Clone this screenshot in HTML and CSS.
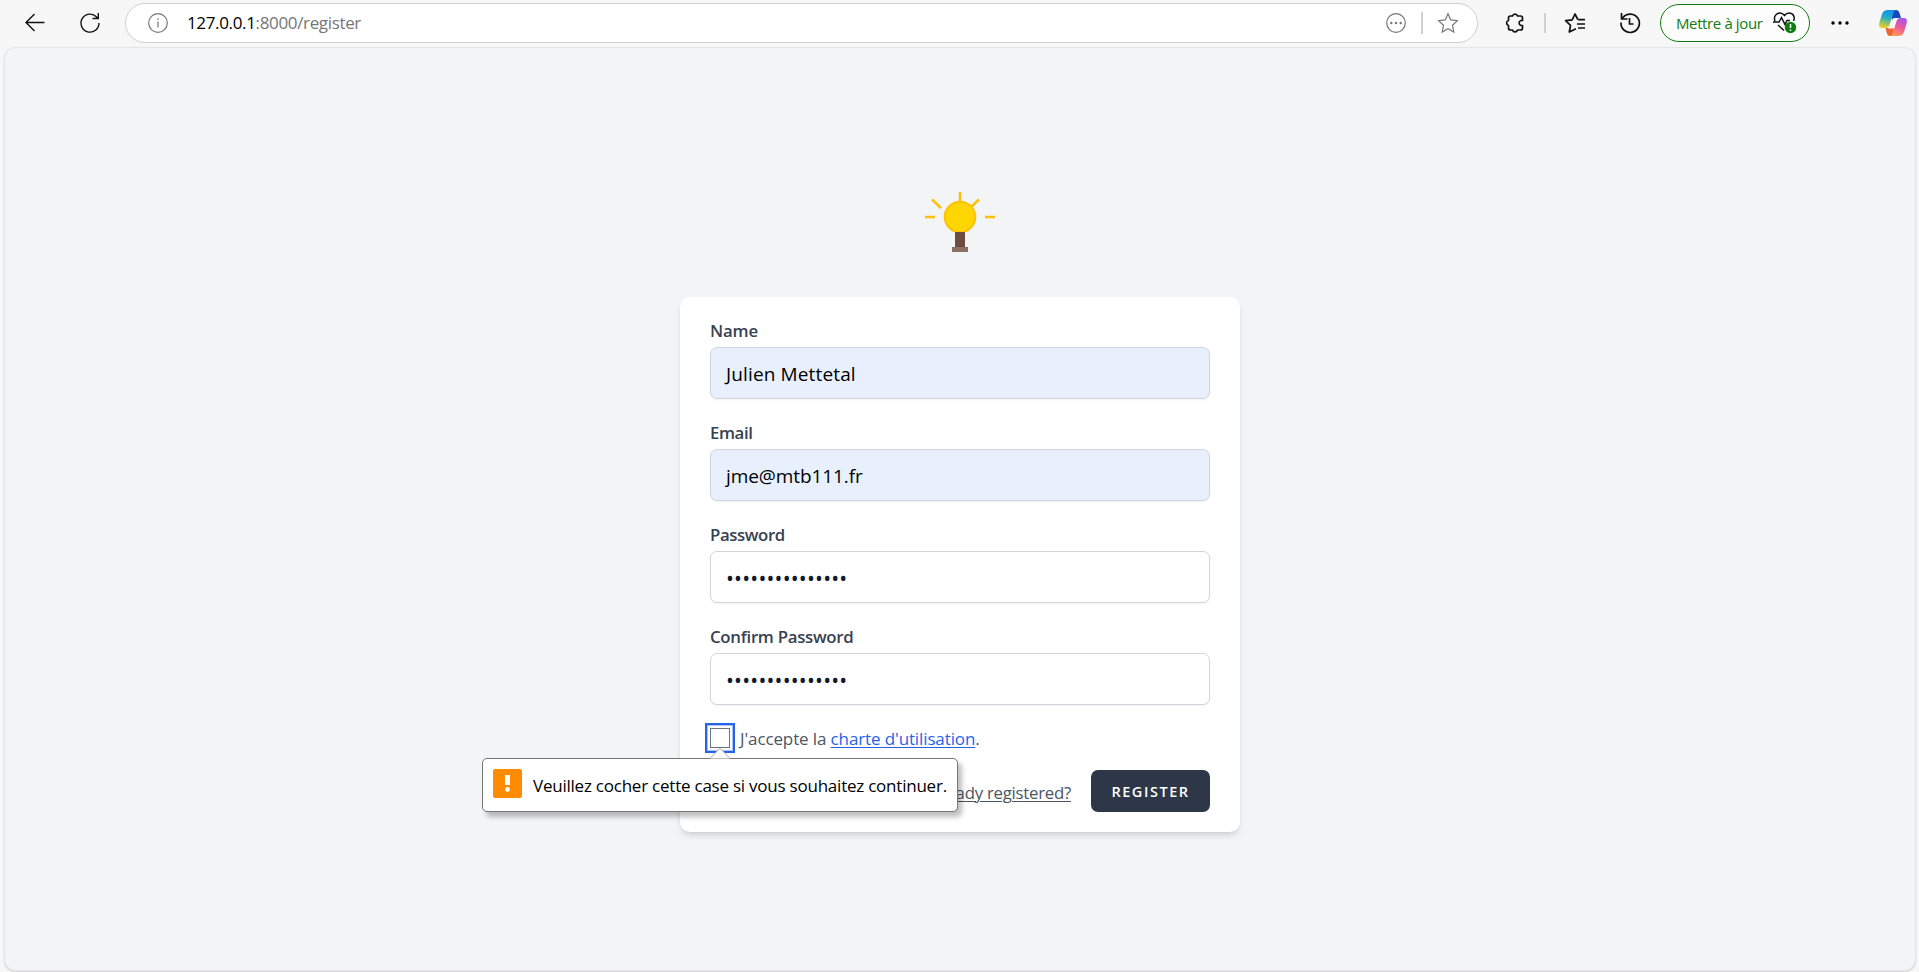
FILE: index.html
```html
<!DOCTYPE html>
<html lang="fr">
<head>
<meta charset="utf-8">
<title>Register</title>
<link rel="stylesheet" href="styles.css">
</head>
<body>
<header class="toolbar">
  <svg class="icon back" viewBox="0 0 20 20"><path d="M19.500 9.500H1M9.500 1 1 9.500 9.500 18"/></svg>
  <svg class="icon reload" viewBox="0 0 20 20"><path d="M19 10A9 9 0 1 1 16.600 4L18 5.500M18.300 0V5.500H12.500"/></svg>
  <div class="address">
    <svg class="icon muted info" viewBox="0 0 20 20"><circle cx="10" cy="10" r="9.300"/><path d="M10 8.500V14.500M10 5.200V7"/></svg>
    <span class="url"><b>127.0.0.1</b>:8000/register</span>
    <svg class="icon muted" viewBox="0 0 20 20"><circle cx="10" cy="10" r="9.300"/><g class="dots"><circle cx="5.300" cy="10" r="1.200"/><circle cx="10" cy="10" r="1.200"/><circle cx="14.700" cy="10" r="1.200"/></g></svg>
    <span class="rule rule-address"></span>
    <svg class="icon muted" viewBox="0 0 20 20"><path d="M10 .8 12.800 6.900 19.400 7.700 14.500 12.300 15.800 19 10 15.700 4.200 19 5.500 12.300.6 7.700 7.200 6.900Z"/></svg>
  </div>
  <svg class="icon puzzle" viewBox="0 0 20 20"><path class="bold" d="M4.500 3H7.500A2.600 2.600 0 0 1 12.500 3H15.500Q17.500 3 17.500 5V7.500H16A2.600 2.600 0 0 0 16 12.500H17.500V15Q17.500 17 15.500 17H12.500A2.600 2.600 0 0 1 7.500 17H5.500Q3.500 17 3.500 15V12.500A2.600 2.600 0 0 1 3.500 7.500V5Q3.500 3 5.500 3"/></svg>
  <span class="rule"></span>
  <svg class="icon favorites" viewBox="0 0 20 20"><path class="bold" d="M11 15.800 4.300 19 5.500 12.300.6 7.700 7.200 6.900 10 1 12.800 6.500M13 6.700H20M12 11H20M13 15H20"/></svg>
  <svg class="icon history" viewBox="0 0 20 20"><path class="bold" d="M1 9.500A9.200 9.200 0 1 0 3 4.500L1.500 6M1.500 0V6H7.500M9.500 5V11H13.500"/></svg>
  <div class="update">
    <span>Mettre à jour</span>
    <svg class="health" viewBox="0 0 24 22"><path d="M2 9C0 4 4 1 7 1Q9.500 1 11.500 3.500 13.500 1 16 1C20 1 22.500 5 20.500 9M0 10H6L8.500 5.500 12 12.500 14 8.500H17M5 13 11 18.500"/><circle cx="17.500" cy="15.500" r="5.700"/><path class="mark" d="M17.500 12V16M17.500 17.500V19"/></svg>
  </div>
  <svg class="more" viewBox="0 0 18 4"><circle cx="2" cy="2" r="1.700"/><circle cx="9" cy="2" r="1.700"/><circle cx="16" cy="2" r="1.700"/></svg>
  <svg class="copilot" viewBox="0 0 28 26">
    <defs>
      <linearGradient id="cool" x1=".5" y1="0" x2=".3" y2="1"><stop offset="0" stop-color="#1692ed"/><stop offset=".4" stop-color="#1eacc9"/><stop offset=".7" stop-color="#8ac36a"/><stop offset="1" stop-color="#f5cf1d"/></linearGradient>
      <linearGradient id="warm" x1=".7" y1="0" x2=".3" y2="1"><stop offset="0" stop-color="#a756ed"/><stop offset=".5" stop-color="#ee599a"/><stop offset="1" stop-color="#ff9d55"/></linearGradient>
    </defs>
    <path fill="#1748bf" d="M12 0H17Q19.500 0 20.500 3L22 8H17Q14 8 13 11Z"/>
    <path fill="#f0642f" d="M6.500 18H10.500L14 15 16 26H11Q8.500 26 7.800 23Z"/>
    <path fill="url(#cool)" d="M9 0H17Q15 0 14 4L10.500 15Q9.500 18 6.500 18H3Q-1 18 .5 12L3 4Q4.300 0 9 0Z"/>
    <path fill="url(#warm)" d="M19 26H11Q13 26 14 22L17.500 11Q18.500 8 21.500 8H25Q29 8 27.500 14L25 22Q23.700 26 19 26Z"/>
    <path fill="#f7f7f7" d="M17 8H20Q18 8.500 17.300 11L15.300 17.500Q14.800 18.500 13.500 18.500H9Q10.300 17.500 10.900 15.500L12.700 10Q13.500 8 17 8Z"/>
  </svg>
</header>
<main class="viewport">
  <svg class="bulb" viewBox="0 0 80 80">
    <path class="ray" d="M40 12V24M5 37H15M65 37H75M12 19.500 21 28M59 19.500 50 28"/>
    <circle cx="40" cy="37" r="15.300"/>
    <path fill="#6d4c41" d="M35 52H45V67H35Z"/><path fill="#8d6e63" d="M32 67H48V72H32Z"/>
  </svg>
  <form class="card">
    <div class="field"><label class="l-name">Name</label><div class="input filled"><span class="v-name">Julien Mettetal</span></div></div>
    <div class="field"><label class="l-email">Email</label><div class="input filled"><span class="v-email">jme@mtb111.fr</span></div></div>
    <div class="field"><label class="l-pass">Password</label><div class="input"><span class="secret">•••••••••••••••</span></div></div>
    <div class="field"><label class="l-confirm">Confirm Password</label><div class="input"><span class="secret">•••••••••••••••</span></div></div>
    <div class="terms">
      <span class="checkbox"></span>
      <span class="terms-text">J'accepte la <a>charte d'utilisation</a>.</span>
      <div class="tooltip">
        <svg class="arrow" viewBox="0 0 22 12"><path d="M1 11.500 11 1.200 21 11.500"/></svg>
        <svg class="warning" viewBox="0 0 29 29"><rect width="29" height="29" rx="2"/><path d="M12 6H17V16H12Z"/><circle cx="14.500" cy="20.500" r="2.400"/></svg>
        <span class="message">Veuillez cocher cette case si vous souhaitez continuer.</span>
      </div>
    </div>
    <div class="actions"><a class="already">Already registered?</a><span class="button">REGISTER</span></div>
  </form>
</main>
</body>
</html>
```
FILE: styles.css
```css
* { box-sizing: border-box; }
body {
  margin: 0; height: 972px; overflow: hidden; background: #f7f7f7;
  font-family: "Open Sans", "Noto Sans", sans-serif;
  display: flex; flex-direction: column;
}
svg { display: block; flex: none; }
.toolbar { height: 47px; padding: 0 12px 1px 25px; display: flex; align-items: center; flex: none; }
.icon { width: 20px; height: 20px; fill: none; stroke: #111; stroke-width: 1.4; overflow: visible; }
.icon .bold { stroke-width: 1.7; stroke-linejoin: round; }
.muted { stroke: #767676; stroke-width: 1.2; }
.dots { fill: #767676; stroke: none; }
.reload { margin-left: 35px; }
.address {
  width: 1353px; height: 40px; margin-left: 25px; padding: 0 19px 0 22px;
  display: flex; align-items: center; flex: none;
  border: 1px solid #cfcfcf; border-radius: 20px; background: #fff;
}
.url { margin-left: 19px; margin-right: auto; padding-bottom: 2px; font-size: 17px; letter-spacing: -.35px; color: #767676; white-space: nowrap; }
.url b { font-weight: 400; color: #000; }
.rule { width: 2px; height: 20px; background: #d0d0d0; margin-left: 19px; }
.rule-address { height: 22px; margin: 0 15px; }
.puzzle { margin-left: 27px; }
.favorites { margin-left: 19px; }
.history { margin-left: 35px; }
.update {
  width: 150px; height: 38px; margin-left: 20px; padding: 0 12px 0 15px;
  display: flex; align-items: center; justify-content: space-between; flex: none;
  border: 1.5px solid #107c10; border-radius: 19px; color: #107c10;
  font-size: 15px; letter-spacing: -.38px; white-space: nowrap; background: #fdfdfd;
}
.update span { padding-bottom: 1px; }
.health { width: 24px; height: 22px; fill: none; stroke: #111; stroke-width: 1.5; }
.health circle { fill: #107c10; stroke: none; }
.health .mark { stroke: #fff; }
.more { width: 18px; height: 4px; margin-left: 21px; }
.copilot { width: 28px; height: 26px; margin-left: auto; }
.viewport {
  width: 1912px; height: 924px; margin-left: 4px; flex: none;
  display: flex; flex-direction: column; align-items: center;
  background: #f3f4f6; border: 1px solid #e6e6e8; border-radius: 12px;
  box-shadow: 0 1px 2px rgba(0,0,0,.15);
}
.bulb { width: 80px; height: 80px; margin-top: 132px; }
.bulb circle { fill: #ffd600; stroke: #ffc107; stroke-width: 2; }
.ray { fill: none; stroke: #ffc107; stroke-width: 2.5; }
.card {
  width: 560px; height: 535px; margin-top: 37px; padding: 20px 30px;
  background: #fff; border-radius: 10px;
  box-shadow: 0 5px 7.5px -1px rgba(0,0,0,.1), 0 2px 5px -2px rgba(0,0,0,.1);
}
.field { margin-bottom: 20px; }
label { display: block; height: 25px; margin-bottom: 5px; line-height: 28px; font-size: 16.8px; font-weight: 600; color: #374151; letter-spacing: -.4px; white-space: nowrap; }
.l-name { letter-spacing: -.15px; }
.l-confirm { letter-spacing: -.28px; }
.input {
  height: 52px; padding: 1px 15px 0; display: flex; align-items: center;
  border: 1px solid #d1d5db; border-radius: 7px; background: #fff;
  box-shadow: 0 1px 2px rgba(0,0,0,.05); font-size: 19px; color: #000; white-space: nowrap;
}
.v-name { letter-spacing: .14px; }
.v-email { letter-spacing: -.08px; }
.filled { background: #e8f0fe; }
.secret { color: #111827; padding-top: 1px; font-size: 21px; letter-spacing: .2px; }
.terms { position: relative; height: 30px; margin-top: -2px; display: flex; align-items: center; }
.checkbox {
  width: 20px; height: 20px; flex: none; border: 1px solid #6b7280; background: #fff;
  box-shadow: 0 0 0 2px #fff, 0 0 0 3px #a8c2f8, 0 0 0 5px #2563eb;
}
.terms-text { margin-left: 10px; font-size: 17px; letter-spacing: -.12px; color: #4b5563; white-space: nowrap; }
.terms-text a { color: #2563eb; text-decoration: underline; text-underline-offset: 2px; text-decoration-thickness: 1px; }
.tooltip {
  position: absolute; left: -228px; top: 35px; width: 476px; height: 54px; padding: 0 10px; z-index: 2;
  display: flex; align-items: center; background: #fff; border: 1px solid #767676; border-radius: 5px;
  box-shadow: 4px 5px 5px rgba(0,0,0,.25);
}
.arrow { position: absolute; left: 226px; top: -12px; width: 22px; height: 12px; fill: #fff; stroke: #aaa; }
.warning { width: 29px; height: 29px; margin-bottom: 3px; fill: #ff8c00; }
.warning path, .warning circle { fill: #fff; }
.message { margin-left: 11px; font-size: 17px; letter-spacing: -.23px; color: #000; white-space: nowrap; }
.actions { margin-top: 17px; height: 42px; display: flex; align-items: center; justify-content: flex-end; }
.already { padding-top: 2px; font-size: 16.8px; letter-spacing: -.25px; color: #4b5563; text-decoration: underline; text-underline-offset: 2px; text-decoration-thickness: 1px; }
.button {
  width: 119px; height: 42px; margin-left: 20px; display: flex; align-items: center; justify-content: center;
  border-radius: 7px; background: #2d3748; color: #fff; font-size: 14.5px; font-weight: 600; letter-spacing: 1.55px;
}
```
